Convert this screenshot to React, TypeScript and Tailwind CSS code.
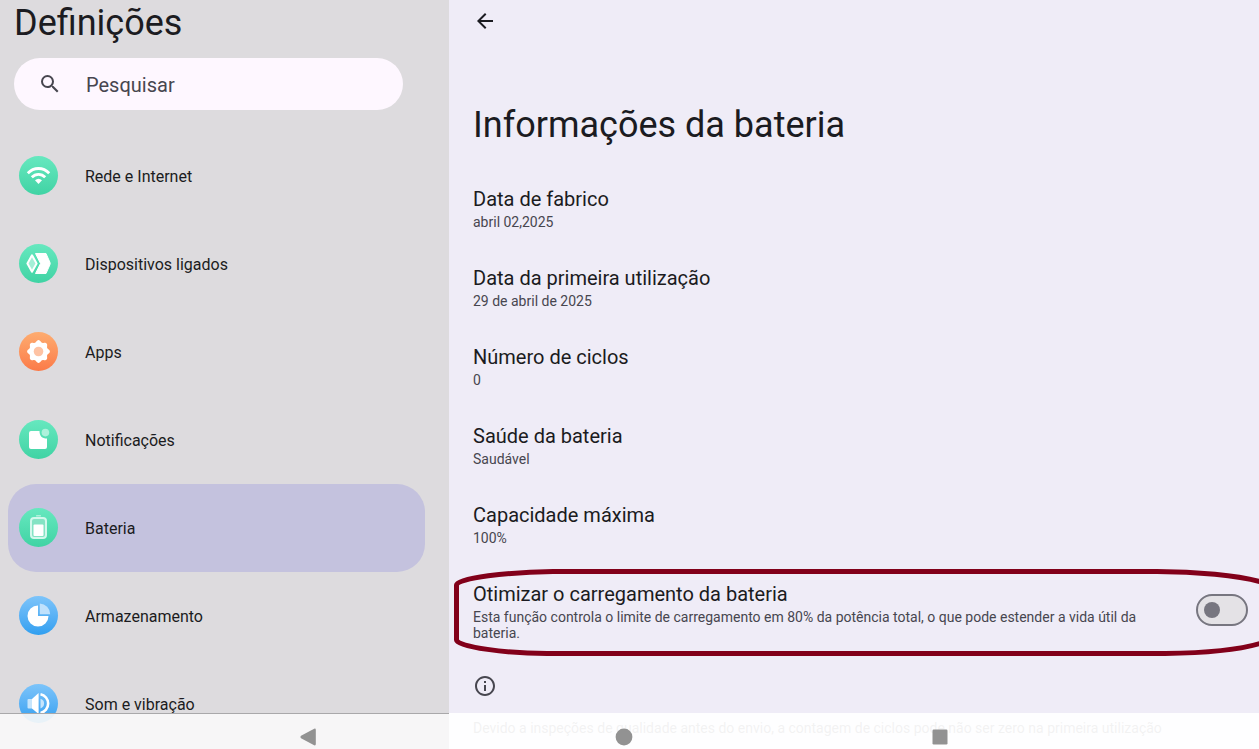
import { useState, type ReactNode } from "react";
import { MdArrowBack, MdOutlineInfo, MdSearch } from "react-icons/md";

type Tone = "green" | "orange" | "blue";

const tones: Record<Tone, string> = {
  green: "bg-linear-to-b from-[#66e8bf] to-[#3fd3a4]",
  orange: "bg-linear-to-b from-[#fdac70] to-[#fb7a48]",
  blue: "bg-linear-to-b from-[#7cc4fa] to-[#2f9ff0]",
};

function Badge({ tone, children }: { tone: Tone; children: ReactNode }) {
  return (
    <span className={`size-[39px] shrink-0 rounded-full ${tones[tone]}`}>
      <svg viewBox="0 0 39 39" className="size-full" aria-hidden="true">
        {children}
      </svg>
    </span>
  );
}

const gearPath = (() => {
  const points: string[] = [];
  for (let i = 0; i < 96; i++) {
    const a = (i / 96) * Math.PI * 2;
    const r = 10.4 + 1 * Math.cos(a * 8);
    points.push(`${(19.5 + r * Math.cos(a)).toFixed(2)} ${(19.5 + r * Math.sin(a)).toFixed(2)}`);
  }
  return `M${points.join("L")}Z`;
})();

const sections: { label: string; tone: Tone; glyph: ReactNode }[] = [
  {
    label: "Rede e Internet",
    tone: "green",
    glyph: (
      <>
        <g fill="none" stroke="#fff" strokeWidth="2.8">
          <path d="M8.8 17.2C14.8 10.9 24.2 10.9 30.2 17.2" />
          <path d="M12.8 21.3C16.6 17.3 22.4 17.3 26.2 21.3" />
        </g>
        <path d="M16 24.2Q19.5 21.2 23 24.2L19.5 28Z" fill="#fff" />
      </>
    ),
  },
  {
    label: "Dispositivos ligados",
    tone: "green",
    glyph: (
      <>
        <path d="M16.5 9.5H27L31 18.5Q31.4 19.5 31 20.5L27 29.5H16.5L21.5 19.5Z" fill="#fff" stroke="#fff" strokeLinejoin="round" />
        <path d="M13 11.3L17.6 19.5L13 27.7L8.4 19.5Z" fill="#a5efd7" stroke="#fff" strokeWidth="2" strokeLinejoin="round" />
      </>
    ),
  },
  {
    label: "Apps",
    tone: "orange",
    glyph: (
      <>
        <path d={gearPath} fill="#fff" />
        <circle cx="19.5" cy="19.5" r="4.8" fill="#fec3a4" />
      </>
    ),
  },
  {
    label: "Notificações",
    tone: "green",
    glyph: (
      <>
        <path d="M12 11H20.5C20.5 16 23 18.6 28 18.6V27Q28 29 26 29H12Q10 29 10 27V13Q10 11 12 11Z" fill="#fff" />
        <circle cx="26.4" cy="12.6" r="3.8" fill="#adf1db" />
      </>
    ),
  },
  {
    label: "Bateria",
    tone: "green",
    glyph: (
      <>
        <rect x="17" y="7" width="5" height="1.5" rx="0.6" fill="#adf1db" />
        <rect x="12" y="10" width="15" height="20" rx="3" fill="#84e3c4" stroke="#d2f8ec" strokeWidth="2" />
        <rect x="14.5" y="16.5" width="10" height="11.5" rx="1" fill="#fff" />
      </>
    ),
  },
  {
    label: "Armazenamento",
    tone: "blue",
    glyph: (
      <>
        <path d="M19 9.5V20H29.5A10.5 10.5 0 1 1 19 9.5Z" fill="#fff" />
        <path d="M20.8 7.5A10.8 10.8 0 0 1 31.2 18.2H20.8Z" fill="#bfe1fc" />
      </>
    ),
  },
  {
    label: "Som e vibração",
    tone: "blue",
    glyph: (
      <>
        <rect x="8.5" y="15" width="6" height="9.5" rx="1" fill="#c6e5fc" />
        <path d="M13 15L19.6 9V30L13 24.5Z" fill="#fff" />
        <path d="M21.5 14.8A5 5 0 0 1 21.5 24.4Z" fill="#c6e5fc" />
        <path d="M21.5 10.2A9.6 9.6 0 0 1 21.5 29" fill="none" stroke="#fff" strokeWidth="2.6" />
      </>
    ),
  },
];

const facts = [
  ["Data de fabrico", "abril 02,2025"],
  ["Data da primeira utilização", "29 de abril de 2025"],
  ["Número de ciclos", "0"],
  ["Saúde da bateria", "Saudável"],
  ["Capacidade máxima", "100%"],
];

function Sidebar() {
  return (
    <aside className="relative overflow-hidden bg-[#dddbde] after:absolute after:inset-x-0 after:bottom-0 after:h-9 after:border-t after:border-[#a9a8aa] after:bg-[#f9f9f9]/92">
      <h1 className="pl-3.5 text-4xl leading-[46px]">Definições</h1>
      <label className="mt-3 mr-[46px] ml-3.5 flex h-[52px] items-center gap-6 rounded-full bg-[#fef7ff] pl-6 text-[#47464f]">
        <MdSearch className="size-6 shrink-0" aria-hidden="true" />
        <input
          type="search"
          aria-label="Pesquisar"
          placeholder="Pesquisar"
          className="min-w-0 flex-1 bg-transparent pt-0.5 text-xl outline-none placeholder:text-[#47464f]"
        />
      </label>
      <nav className="mt-[22px] mr-6 ml-2">
        {sections.map(({ label, tone, glyph }) => (
          <a
            key={label}
            href="#"
            aria-current={label === "Bateria" ? "page" : undefined}
            className="flex h-[88px] items-center gap-[27px] rounded-[28px] pb-px pl-[11px] text-base aria-[current=page]:bg-[#c4c2de]"
          >
            <Badge tone={tone}>{glyph}</Badge>
            <span className="pt-[3px]">{label}</span>
          </a>
        ))}
      </nav>
    </aside>
  );
}

function BatteryInfo() {
  const [optimised, setOptimised] = useState(false);
  return (
    <main className="relative overflow-hidden bg-[#efecf7] after:absolute after:inset-x-0 after:bottom-0 after:h-9 after:bg-white/93">
      <button type="button" aria-label="Voltar" className="mt-[9px] ml-6 block">
        <MdArrowBack className="size-6" />
      </button>
      <h2 className="mt-[69px] pl-6 text-4xl leading-[46px]">Informações da bateria</h2>
      <dl className="mt-[21px]">
        {facts.map(([name, value]) => (
          <div key={name} className="px-6 py-[18px]">
            <dt className="text-xl leading-6">{name}</dt>
            <dd className="mt-[3px] text-sm leading-4 text-[#47464f]">{value}</dd>
          </div>
        ))}
      </dl>
      <div className="relative flex gap-6 py-[18px] pr-[11px] pl-6">
        <label htmlFor="optimise" className="flex-1">
          <span className="block text-xl leading-6">Otimizar o carregamento da bateria</span>
          <span className="mt-[3px] block text-sm leading-4 text-[#47464f]">
            Esta função controla o limite de carregamento em 80% da potência total, o que pode estender a vida útil da
            bateria.
          </span>
        </label>
        <input
          id="optimise"
          type="checkbox"
          role="switch"
          checked={optimised}
          onChange={(e) => setOptimised(e.target.checked)}
          className="mt-3 flex h-8 w-[52px] shrink-0 appearance-none items-center rounded-full border-2 border-[#777680] bg-[#e4e2e6] px-1.5 before:size-4 before:rounded-full before:bg-[#777680] checked:justify-end checked:bg-[#c4c2de]"
        />
        <svg
          viewBox="0 0 810 95"
          preserveAspectRatio="none"
          className="pointer-events-none absolute inset-0 size-full"
          aria-hidden="true"
        >
          <path
            d="M814 18.5C790 11 745 7.5 708 7.5H104C60 8 7.5 14 7.5 21V76C7.5 83 60 89.5 98 89.5H716C755 89 792 86 814 78.5"
            fill="none"
            stroke="#82001a"
            strokeWidth="5"
          />
        </svg>
      </div>
      <MdOutlineInfo className="mt-[15px] ml-6 size-6 text-[#47464f]" aria-hidden="true" />
      <p className="mt-[22px] pl-6 text-sm leading-4 whitespace-nowrap text-[#47464f]">
        Devido a inspeções de qualidade antes do envio, a contagem de ciclos pode não ser zero na primeira utilização
      </p>
    </main>
  );
}

function SystemBar() {
  return (
    <footer className="absolute inset-x-0 bottom-0 z-10 flex h-9 items-center justify-evenly pt-3 pr-3 text-[#929292]">
      <button type="button" aria-label="Anterior">
        <svg viewBox="0 0 18 18" className="size-[18px]" fill="currentColor">
          <path d="M16.2 .7Q17.8 .1 17.8 2V16Q17.8 17.9 16.2 17.3L3 10.2Q1.6 9 3 7.8Z" />
        </svg>
      </button>
      <button type="button" aria-label="Início">
        <svg viewBox="0 0 18 18" className="size-[18px]" fill="currentColor">
          <circle cx="9" cy="9" r="8.4" />
        </svg>
      </button>
      <button type="button" aria-label="Recentes">
        <svg viewBox="0 0 18 18" className="size-[18px]" fill="currentColor">
          <rect x="1.5" y="1.5" width="15" height="15" rx="1.2" />
        </svg>
      </button>
    </footer>
  );
}

export default function App() {
  return (
    <div className="relative grid h-screen grid-cols-[449fr_810fr] overflow-hidden font-['Roboto',sans-serif] text-[#1b1b21]">
      <Sidebar />
      <BatteryInfo />
      <SystemBar />
    </div>
  );
}
